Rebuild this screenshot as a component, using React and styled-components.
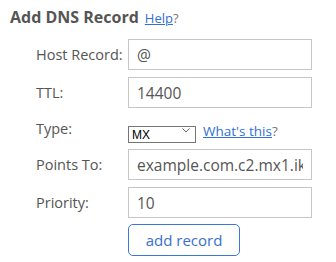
import React from 'react'
import styled, { createGlobalStyle } from 'styled-components'

const Global = createGlobalStyle`
  html, body { margin: 0; padding: 0; background: #fff; }
  body { font-family: "Open Sans", "Noto Sans", Arial, sans-serif; color: #555; }
`

const Panel = styled.div`
  padding: 7px 0 0 10px;
`

const Title = styled.h2`
  margin: 0;
  font-size: 16px;
  font-weight: 700;
  color: #555;
  line-height: 21px;
  display: flex;
  align-items: baseline;
  gap: 6px;
`

const Help = styled.span`
  font-size: 13px;
  font-weight: 400;
  color: #777;
  a { color: #2f6fd6; text-decoration: underline; }
`

const Form = styled.div`
  margin: 10px 0 0 26px;
  display: grid;
  grid-template-columns: 92px 184px;
  row-gap: 7px;
  align-items: center;
`

const Label = styled.label`
  font-size: 14.5px;
  color: #555;
`

const Input = styled.input`
  box-sizing: border-box;
  width: 184px;
  height: 31px;
  border: 1px solid #c6c6c6;
  padding: 0 8px;
  font-family: inherit;
  font-size: 15.5px;
  color: #555;
  outline: none;
`

const TypeCell = styled.div`
  display: flex;
  align-items: center;
  gap: 7px;
  padding: 4px 0 1px;
`

const SelectWrap = styled.div`
  position: relative;
  width: 68px;
  height: 17px;
`

const Select = styled.select`
  appearance: none;
  box-sizing: border-box;
  width: 68px;
  height: 17px;
  border: 1px solid #767676;
  border-radius: 0;
  background: #fff;
  padding: 0 0 0 3px;
  font-family: Arial, "Liberation Sans", sans-serif;
  font-size: 12px;
  color: #000;
`

const Chevron = styled.svg`
  position: absolute;
  right: 6px;
  top: 6px;
  pointer-events: none;
`

const Link = styled.a`
  font-size: 13.5px;
  color: #2f6fd6;
  text-decoration: underline;
`

const Q = styled.span`
  font-size: 13.5px;
  color: #777;
`

const Button = styled.button`
  box-sizing: border-box;
  width: 112px;
  height: 32px;
  margin-top: -1px;
  border: 1px solid #3a78d8;
  border-radius: 5px;
  background: #fff;
  color: #3a6fd0;
  font-family: inherit;
  font-size: 15px;
`

function App() {
  return (
    <Panel>
      <Global />
      <Title>
        Add DNS Record
        <Help><a href="#">Help</a>?</Help>
      </Title>
      <Form>
        <Label>Host Record:</Label>
        <Input defaultValue="@" />
        <Label>TTL:</Label>
        <Input defaultValue="14400" />
        <Label>Type:</Label>
        <TypeCell>
          <SelectWrap>
            <Select defaultValue="MX">
              <option>A</option>
              <option>CNAME</option>
              <option>MX</option>
              <option>TXT</option>
            </Select>
            <Chevron width="8" height="5" viewBox="0 0 8 5">
              <path d="M0.5 0.5 L4 4 L7.5 0.5" fill="none" stroke="#555" strokeWidth="0.9" />
            </Chevron>
          </SelectWrap>
          <span><Link href="#">What's this</Link><Q>?</Q></span>
        </TypeCell>
        <Label>Points To:</Label>
        <Input defaultValue="example.com.c2.mx1.ik2.com" />
        <Label>Priority:</Label>
        <Input defaultValue="10" />
        <span />
        <div><Button>add record</Button></div>
      </Form>
    </Panel>
  )
}

export default App
